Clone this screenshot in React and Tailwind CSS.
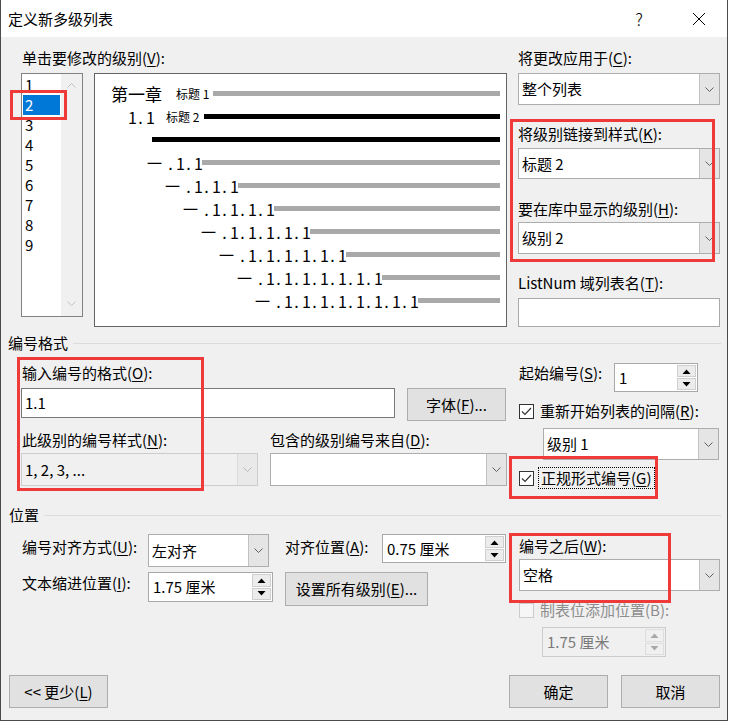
import React from 'react'

const redBox = 'absolute border-[3px] border-[#ef3a3a] pointer-events-none'

function Chevron({ color = '#606060' }) {
  return (
    <svg width="9" height="5" viewBox="0 0 9 5">
      <polyline points="0.5,0.5 4.5,4.5 8.5,0.5" fill="none" stroke={color} strokeWidth="1" />
    </svg>
  )
}

function Tri({ up, color }) {
  return (
    <svg width="9" height="5" viewBox="0 0 9 5">
      <polygon points={up ? '0.5,5 4.5,0.5 8.5,5' : '0.5,0 4.5,4.5 8.5,0'} fill={color} />
    </svg>
  )
}

function Combo({ className, text, disabled }) {
  return (
    <div className={`flex border ${disabled ? 'border-[#cccccc] bg-[#f0f0f0] text-black' : 'border-[#adadad] bg-white'} ${className}`}>
      <div className="flex-1 flex items-center pl-[3px] whitespace-nowrap">{text}</div>
      <div className={`w-[20px] flex items-center justify-center border-l ${disabled ? 'bg-[#e9e9e9] border-[#dadada]' : 'bg-[#e5e5e5] border-[#c2c2c2]'}`}>
        <Chevron color={disabled ? '#b8b8b8' : '#606060'} />
      </div>
    </div>
  )
}

function Spin({ className, text, disabled }) {
  const c = disabled ? '#a8a8a8' : '#000000'
  return (
    <div className={`flex border ${disabled ? 'border-[#cccccc] bg-[#f0f0f0] text-[#7a7a7a]' : 'border-[#a9a9a9] bg-white'} ${className}`}>
      <div className="flex-1 flex items-center pl-[4px] whitespace-nowrap">{text}</div>
      <div className="w-[21px] flex flex-col gap-px p-px">
        <div className={`flex-1 flex items-center justify-center border ${disabled ? 'border-[#dedede] bg-[#f0f0f0]' : 'border-[#cfcfcf] bg-[#ececec]'}`}>
          <Tri up color={c} />
        </div>
        <div className={`flex-1 flex items-center justify-center border ${disabled ? 'border-[#dedede] bg-[#f0f0f0]' : 'border-[#cfcfcf] bg-[#ececec]'}`}>
          <Tri color={c} />
        </div>
      </div>
    </div>
  )
}

function Check({ checked, disabled }) {
  return (
    <div className={`w-[15px] h-[15px] shrink-0 border flex items-center justify-center ${disabled ? 'border-[#cccccc] bg-[#f6f6f6]' : 'border-[#333333] bg-white'}`}>
      {checked && (
        <svg width="11" height="9" viewBox="0 0 11 9">
          <polyline points="1,4.5 4,7.5 10,1" fill="none" stroke="#333333" strokeWidth="1.2" />
        </svg>
      )}
    </div>
  )
}

function Button({ className, children }) {
  return (
    <div className={`flex items-center justify-center bg-[#e1e1e1] border border-[#adadad] whitespace-nowrap ${className}`}>
      {children}
    </div>
  )
}

function Header({ children, className }) {
  return (
    <div className={`h-[20px] flex items-center pl-[7px] ${className}`}>
      <span>{children}</span>
      <div className="flex-1 h-px bg-[#dcdcdc] ml-[5px] mr-[6px]"></div>
    </div>
  )
}

// one ". 1" step of the preview numbering
function Dot1() {
  return (
    <span className="flex w-[18px] shrink-0 text-[16px]">
      <span className="w-[11px] shrink-0 text-center">.</span>
      <span className="w-[7px] shrink-0">1</span>
    </span>
  )
}

function App() {
  const levels = ['1', '2', '3', '4', '5', '6', '7', '8', '9']
  // rows 4..10 of the preview: each level adds one ". 1"
  const deep = [2, 3, 4, 5, 6, 7, 8]

  return (
    <div className="relative w-[728px] h-[721px] flex flex-col border-x border-b border-[#4b4b4b] bg-[#f0f0f0] text-black text-[15px] leading-[20px] font-['Noto_Sans_CJK_SC','Noto_Sans',sans-serif]">
      {/* title bar */}
      <div className="h-[37px] shrink-0 bg-white flex items-center pl-[7px] pr-[21px]">
        <span>定义新多级列表</span>
        <span className="ml-auto w-[20px] text-center text-[17px] font-light">?</span>
        <svg className="ml-[43px]" width="14" height="14" viewBox="0 0 14 14">
          <path d="M1 1 L13 13 M13 1 L1 13" stroke="#000" strokeWidth="1" />
        </svg>
      </div>

      <div className="flex-1 flex flex-col pt-[11px]">
        {/* top section */}
        <div className="flex pl-[20px]">
          <div className="w-[486px] flex flex-col">
            <div className="ml-px h-[20px] whitespace-nowrap">单击要修改的级别(<u className="underline-offset-2">V</u>):</div>
            <div className="flex items-start mt-[5px]">
              <div className="w-[62px] h-[244px] border border-[#828282] bg-white flex">
                <div className="flex-1 flex flex-col pt-px">
                  {levels.map((l) => (
                    <div key={l} className={`h-[20px] mx-px pl-[2px] flex items-center ${l === '2' ? 'bg-[#0078d7] text-white' : ''}`}>{l}</div>
                  ))}
                </div>
                <div className="w-[21px] bg-[#f0f0f0] flex flex-col items-center justify-between pt-[9px] pb-[10px]">
                  <svg width="9" height="5" viewBox="0 0 9 5">
                    <polyline points="0.5,4.5 4.5,0.5 8.5,4.5" fill="none" stroke="#c2c2c2" strokeWidth="1" />
                  </svg>
                  <Chevron color="#c2c2c2" />
                </div>
              </div>

              <div className="ml-[11px] w-[413px] h-[254px] border border-[#646464] bg-white flex flex-col pt-[8px] whitespace-nowrap">
                <div className="h-[23px] flex items-center ml-[16px] mr-[6px]">
                  <span className="w-[65px] text-[17px]">第一章</span>
                  <span className="w-[37px] text-[12px]">标题 1</span>
                  <div className="flex-1 h-[5px] bg-[#a9a9a9]"></div>
                </div>
                <div className="h-[23px] flex items-center ml-[33px] mr-[6px]">
                  <span className="w-[38px] flex shrink-0">
                    <span className="w-[7px] shrink-0 text-[16px]">1</span>
                    <Dot1 />
                  </span>
                  <span className="w-[38px] shrink-0 text-[12px]">标题 2</span>
                  <div className="flex-1 h-[5px] bg-black"></div>
                </div>
                <div className="h-[23px] flex items-center ml-[57px] mr-[6px]">
                  <div className="flex-1 h-[5px] bg-black"></div>
                </div>
                {deep.map((n, k) => (
                  <div key={n} className="h-[23px] flex items-center mr-[6px]" style={{ marginLeft: 52 + 18 * k }}>
                    <span className="flex shrink-0" style={{ width: 55 + 18 * k }}>
                      <span className="w-[18px] shrink-0">一</span>
                      {Array.from({ length: n }).map((_, i) => <Dot1 key={i} />)}
                    </span>
                    <div className="flex-1 h-[5px] bg-[#a9a9a9]"></div>
                  </div>
                ))}
              </div>
            </div>
          </div>

          <div className="ml-[11px] w-[202px] flex flex-col whitespace-nowrap">
            <div className="h-[20px]">将更改应用于(<u className="underline-offset-2">C</u>):</div>
            <Combo className="mt-[5px] h-[32px]" text="整个列表" />
            <div className="mt-[19px] h-[20px]">将级别链接到样式(<u className="underline-offset-2">K</u>):</div>
            <Combo className="mt-[4px] h-[31px]" text="标题 2" />
            <div className="mt-[20px] h-[20px]">要在库中显示的级别(<u className="underline-offset-2">H</u>):</div>
            <Combo className="mt-[3px] h-[32px]" text="级别 2" />
            <div className="mt-[19px] h-[20px]">ListNum 域列表名(<u className="underline-offset-2">T</u>):</div>
            <div className="mt-[5px] h-[29px] border border-[#a9a9a9] bg-white"></div>
          </div>
        </div>

        <Header className="mt-[6px]">编号格式</Header>

        {/* number format */}
        <div className="h-[152px] flex pl-[20px] whitespace-nowrap">
          <div className="w-[487px] flex flex-col">
            <div className="mt-[10px] ml-px h-[20px]">输入编号的格式(<u className="underline-offset-2">O</u>):</div>
            <div className="mt-[5px] flex items-start">
              <div className="w-[374px] h-[30px] border border-[#7a7a7a] bg-white flex items-center pl-[3px]">1.1</div>
              <Button className="ml-[12px] w-[99px] h-[33px]">字体(<u className="underline-offset-2">F</u>)...</Button>
            </div>
            <div className="mt-[9px] h-[20px] flex">
              <span className="ml-px w-[248px]">此级别的编号样式(<u className="underline-offset-2">N</u>):</span>
              <span>包含的级别编号来自(<u className="underline-offset-2">D</u>):</span>
            </div>
            <div className="mt-[3px] flex">
              <Combo disabled className="w-[237px] h-[33px]" text="1, 2, 3, ..." />
              <Combo className="ml-[12px] w-[237px] h-[33px]" text="" />
            </div>
          </div>

          <div className="ml-[11px] w-[201px] flex flex-col">
            <div className="mt-[10px] flex items-start">
              <span className="w-[95px]">起始编号(<u className="underline-offset-2">S</u>):</span>
              <Spin className="w-[84px] h-[29px]" text="1" />
            </div>
            <div className="mt-[11px] h-[16px] flex items-center">
              <Check checked />
              <span className="ml-[6px]">重新开始列表的间隔(<u className="underline-offset-2">R</u>):</span>
            </div>
            <Combo className="ml-[24px] mt-[9px] w-[176px] h-[32px]" text="级别 1" />
            <div className="mt-[7px] h-[22px] flex items-center">
              <Check checked />
              <span className="ml-[4px] border border-dotted border-black px-[2px] leading-[20px]">正规形式编号(<u className="underline-offset-2">G</u>)</span>
            </div>
          </div>
        </div>

        <Header className="pl-[8px]">位置</Header>

        {/* position */}
        <div className="flex pl-[20px] whitespace-nowrap">
          <div className="mt-[9px] grid grid-cols-[127px_137px_97px_124px] grid-rows-[33px_34px] gap-y-[5px] items-start">
            <span className="mt-[3px] ml-px">编号对齐方式(<u className="underline-offset-2">U</u>):</span>
            <Combo className="w-[121px] h-[33px]" text="左对齐" />
            <span className="mt-[3px]">对齐位置(<u className="underline-offset-2">A</u>):</span>
            <Spin className="w-[124px] h-[29px]" text="0.75 厘米" />
            <span className="mt-px ml-px">文本缩进位置(<u className="underline-offset-2">I</u>):</span>
            <Spin className="w-[125px] h-[30px]" text="1.75 厘米" />
            <Button className="col-span-2 w-[143px] h-[34px]">设置所有级别(<u className="underline-offset-2">E</u>)...</Button>
          </div>

          <div className="ml-[13px] w-[201px] flex flex-col">
            <div className="mt-[11px] h-[20px]">编号之后(<u className="underline-offset-2">W</u>):</div>
            <Combo className="mt-[3px] h-[32px]" text="空格" />
            <div className="mt-[11px] h-[16px] flex items-center">
              <Check disabled />
              <span className="ml-[6px] text-[#8d8d8d]">制表位添加位置(B):</span>
            </div>
            <Spin disabled className="ml-[23px] mt-[9px] w-[124px] h-[30px]" text="1.75 厘米" />
          </div>
        </div>

        {/* bottom buttons */}
        <div className="mt-auto mb-[12px] flex pl-[8px] pr-[7px]">
          <Button className="w-[99px] h-[33px]">&lt;&lt; 更少(<u className="underline-offset-2">L</u>)</Button>
          <Button className="ml-auto w-[99px] h-[33px]">确定</Button>
          <Button className="ml-[13px] w-[99px] h-[33px]">取消</Button>
        </div>
      </div>

      {/* red annotation boxes */}
      <div className={`${redBox} left-[9px] top-[90px] w-[57px] h-[30px]`}></div>
      <div className={`${redBox} left-[509px] top-[119px] w-[205px] h-[143px]`}></div>
      <div className={`${redBox} left-[16px] top-[357px] w-[187px] h-[134px]`}></div>
      <div className={`${redBox} left-[508px] top-[456px] w-[149px] h-[43px]`}></div>
      <div className={`${redBox} left-[508px] top-[533px] w-[162px] h-[70px]`}></div>
    </div>
  )
}

export default App
